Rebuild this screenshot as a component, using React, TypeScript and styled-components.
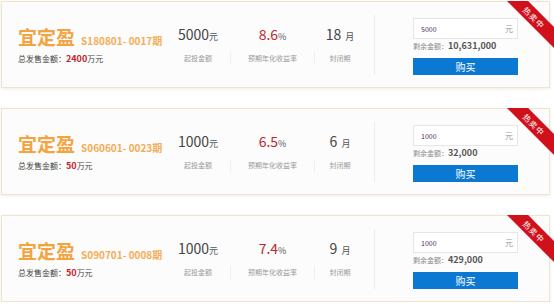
import styled, { createGlobalStyle } from "styled-components"

const GlobalStyle = createGlobalStyle`
  body {
    margin: 0;
    background: #fff;
    font-family: "Noto Sans CJK SC", "Noto Sans", sans-serif;
  }
`

type Product = {
  series: string
  total: string
  minAmount: string
  rate: string
  term: string
  input: string
  remaining: string
}

const products: Product[] = [
  { series: "S180801- 0017期", total: "2400", minAmount: "5000", rate: "8.6", term: "18", input: "5000", remaining: "10,631,000" },
  { series: "S060601- 0023期", total: "50", minAmount: "1000", rate: "6.5", term: "6", input: "1000", remaining: "32,000" },
  { series: "S090701- 0008期", total: "50", minAmount: "1000", rate: "7.4", term: "9", input: "1000", remaining: "429,000" },
]

function ProductCard({ product }: { product: Product }) {
  return (
    <Card>
      <LeftInfo>
        <TitleRow>
          <Title>宜定盈</Title>
          <Series>{product.series}</Series>
        </TitleRow>
        <SubLine>
          总发售金额：<strong>{product.total}</strong>万元
        </SubLine>
      </LeftInfo>

      <Stats>
        <Stat $width={64}>
          <Value>
            {product.minAmount}
            <Unit>元</Unit>
          </Value>
          <Label>起投金额</Label>
        </Stat>
        <SmallDivider />
        <Stat $width={83}>
          <Value $red>
            {product.rate}
            <Unit>%</Unit>
          </Value>
          <Label>预期年化收益率</Label>
        </Stat>
        <SmallDivider />
        <Stat $width={50}>
          <Value>
            {product.term}
            <Unit $gap>月</Unit>
          </Value>
          <Label>封闭期</Label>
        </Stat>
      </Stats>

      <BigDivider />

      <BuyBox>
        <AmountBox>
          <span>{product.input}</span>
          <em>元</em>
        </AmountBox>
        <Remaining>
          剩余金额：<b>{product.remaining}</b>
        </Remaining>
        <BuyButton>购买</BuyButton>
      </BuyBox>

      <Ribbon>
        <span>热卖中</span>
      </Ribbon>
    </Card>
  )
}

export default function App() {
  return (
    <>
      <GlobalStyle />
      <List>
        {products.map((p) => (
          <ProductCard key={p.series} product={p} />
        ))}
      </List>
    </>
  )
}

const List = styled.div`
  display: flex;
  flex-direction: column;
  gap: 20px;
  padding: 1px 0 0 1px;
  width: 549px;
`

const Card = styled.div`
  position: relative;
  display: flex;
  align-items: center;
  box-sizing: border-box;
  height: 87px;
  padding-left: 16px;
  border: 1px solid #f1e4cb;
  background: #fcfcfc;
  box-shadow: 0 1px 3px rgba(0, 0, 0, 0.08);
`

const LeftInfo = styled.div`
  flex-shrink: 0;
  width: 148px;
  display: flex;
  flex-direction: column;
  gap: 1px;
  margin-top: 1px;
`

const TitleRow = styled.div`
  display: flex;
  align-items: baseline;
  gap: 6px;
  line-height: 22px;
  white-space: nowrap;
`

const Title = styled.span`
  flex-shrink: 0;
  font-size: 19px;
  font-weight: bold;
  color: #f4a33e;
`

const Series = styled.span`
  font-size: 10px;
  font-weight: bold;
  color: #f3ad55;
`

const SubLine = styled.div`
  font-size: 8px;
  line-height: 12px;
  color: #444;
  white-space: nowrap;

  strong {
    color: #c0262c;
    font-size: 9px;
  }
`

const Stats = styled.div`
  flex-shrink: 0;
  display: flex;
`

const Stat = styled.div<{ $width: number }>`
  width: ${({ $width }) => $width}px;
  display: flex;
  flex-direction: column;
  align-items: center;
`

const Value = styled.div<{ $red?: boolean }>`
  font-size: 14px;
  line-height: 20px;
  color: ${({ $red }) => ($red ? "#c0262c" : "#444")};
  white-space: nowrap;
`

const Unit = styled.span<{ $gap?: boolean }>`
  font-size: 9px;
  color: #555;
  margin-left: ${({ $gap }) => ($gap ? "4px" : "0")};
`

const Label = styled.div`
  margin-top: 5px;
  font-size: 7px;
  line-height: 13px;
  color: #999;
  white-space: nowrap;
`

const SmallDivider = styled.div`
  align-self: flex-end;
  width: 1px;
  height: 13px;
  background: #efefef;
`

const BigDivider = styled.div`
  flex-shrink: 0;
  width: 1px;
  height: 60px;
  margin-left: 9px;
  background: #ececec;
`

const BuyBox = styled.div`
  flex-shrink: 0;
  width: 105px;
  margin-left: 38px;
  margin-top: 4px;
  display: flex;
  flex-direction: column;
`

const AmountBox = styled.div`
  box-sizing: border-box;
  height: 21px;
  display: flex;
  align-items: center;
  justify-content: space-between;
  padding: 0 4px 0 7px;
  border: 1px solid #e6e6e6;
  background: #fff;
  font-size: 7px;
  color: #3f2d55;

  em {
    font-style: normal;
    font-size: 8px;
    color: #999;
  }
`

const Remaining = styled.div`
  margin-top: 1px;
  font-size: 7px;
  line-height: 12px;
  color: #888;
  white-space: nowrap;

  b {
    font-size: 9px;
    color: #555;
  }
`

const BuyButton = styled.div`
  margin-top: 6px;
  height: 17px;
  line-height: 17px;
  text-align: center;
  background: #0b79d1;
  color: #fff;
  font-size: 10px;
`

const Ribbon = styled.div`
  position: absolute;
  top: -1px;
  right: -5px;
  width: 50px;
  height: 50px;
  overflow: hidden;

  span {
    position: absolute;
    left: -15px;
    top: 9px;
    width: 90px;
    height: 15px;
    line-height: 15px;
    text-align: center;
    transform: rotate(45deg);
    background: #d0111b;
    color: #fff;
    font-size: 8px;
    letter-spacing: 1px;
  }
`
